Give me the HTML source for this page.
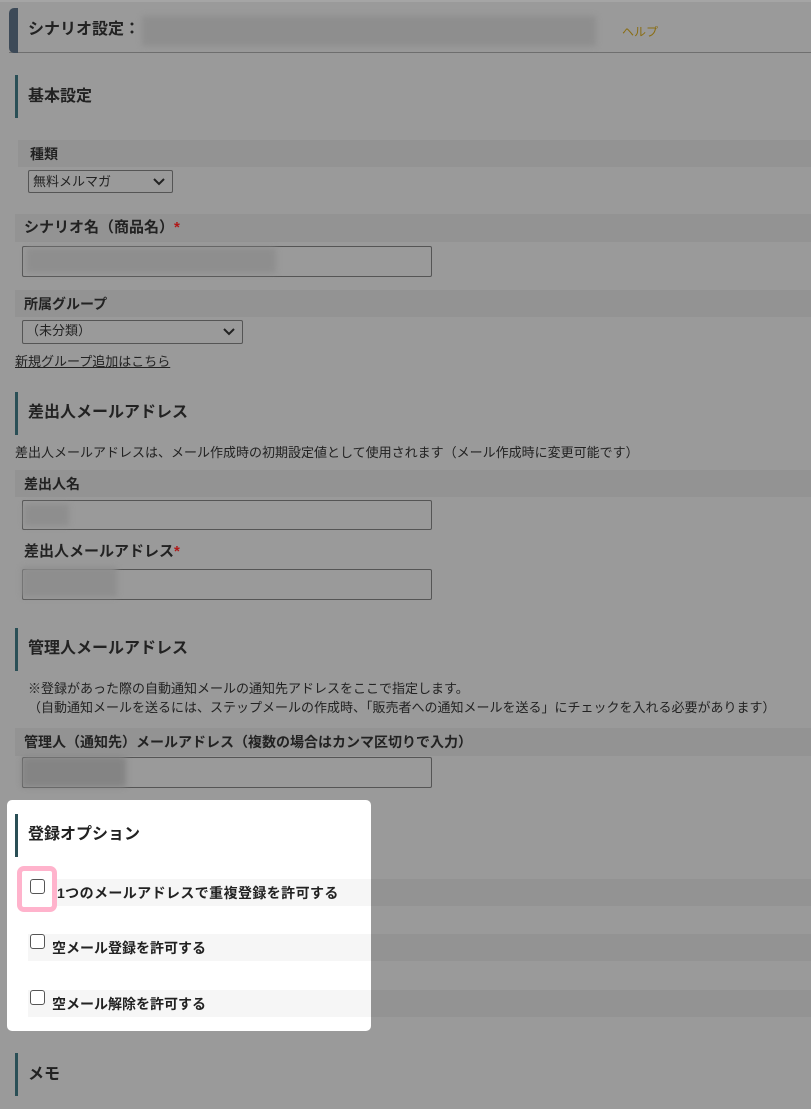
<!DOCTYPE html>
<html><head><meta charset="utf-8"><style>
*{margin:0;padding:0;box-sizing:border-box}
body{width:811px;height:1109px;background:#9a9a9a;font-family:"Liberation Sans","Noto Sans CJK JP",sans-serif;color:#222;position:relative;overflow:hidden}
.a{position:absolute;white-space:nowrap}
.h{font-weight:bold;font-size:16px;line-height:20px}
.bar{position:absolute;width:3px;background:#2a4f56}
.lb{position:absolute;background:#939393;right:0;height:27px}
.l{font-weight:bold;font-size:14px;line-height:18px}
.in{position:absolute;border:1px solid #555;border-radius:2px;background:#9a9a9a}
.blur{position:absolute;background:#8e8e8e;filter:blur(3px)}
.s{font-size:13px;line-height:16px}
.cb{position:absolute;width:15px;height:15px;border:1px solid #555;border-radius:3px;background:#fff}
.red{color:#b01818}
</style></head><body>
<div class="a" style="left:0;top:0;width:811px;height:2px;background:#a5a5a5"></div>
<div class="a" style="left:9px;top:8px;width:802px;height:45px;border-bottom:1px solid #6f6f6f"></div>
<div class="a" style="left:9px;top:8px;width:9px;height:45px;background:#3d4a58;border-radius:5px 0 0 5px"></div>
<div class="a h" style="left:28px;top:20px">シナリオ設定：</div>
<div class="blur" style="left:142px;top:16px;width:454px;height:30px"></div>
<div class="a" style="left:622px;top:23px;font-size:12px;color:#8a6d12">ヘルプ</div>

<div class="bar" style="left:15px;top:75px;height:43px"></div>
<div class="a h" style="left:28px;top:87px">基本設定</div>
<div class="lb" style="left:18px;top:140px;height:27px"></div>
<div class="a l" style="left:30px;top:145px">種類</div>
<div class="in" style="left:28px;top:170px;width:145px;height:23px"></div>
<div class="a s" style="left:33px;top:174px">無料メルマガ</div>
<svg class="a" style="left:153px;top:177px" width="12" height="10"><path d="M1 2 L6 7 L11 2" stroke="#222" stroke-width="2" fill="none"/></svg>

<div class="lb" style="left:15px;top:214px;height:28px"></div>
<div class="a l" style="left:24px;top:219px;font-size:15px">シナリオ名（商品名）<span class="red">*</span></div>
<div class="in" style="left:22px;top:246px;width:410px;height:31px"></div>
<div class="blur" style="left:26px;top:248px;width:250px;height:25px"></div>
<div class="lb" style="left:15px;top:290px;height:27px"></div>
<div class="a l" style="left:24px;top:295px">所属グループ</div>
<div class="in" style="left:22px;top:320px;width:221px;height:24px"></div>
<div class="a s" style="left:26px;top:323px">（未分類）</div>
<svg class="a" style="left:223px;top:327px" width="12" height="10"><path d="M1 2 L6 7 L11 2" stroke="#222" stroke-width="2" fill="none"/></svg>
<div class="a" style="left:15px;top:351px;font-size:13px;text-decoration:underline">新規グループ追加はこちら</div>

<div class="bar" style="left:15px;top:392px;height:43px"></div>
<div class="a h" style="left:28px;top:403px">差出人メールアドレス</div>
<div class="a s" style="left:15px;top:445px">差出人メールアドレスは、メール作成時の初期設定値として使用されます（メール作成時に変更可能です）</div>
<div class="lb" style="left:15px;top:470px;height:27px"></div>
<div class="a l" style="left:24px;top:475px">差出人名</div>
<div class="in" style="left:22px;top:500px;width:410px;height:30px"></div>
<div class="blur" style="left:24px;top:504px;width:45px;height:22px"></div>
<div class="a l" style="left:24px;top:543px;font-size:15px">差出人メールアドレス<span class="red">*</span></div>
<div class="in" style="left:22px;top:569px;width:410px;height:31px"></div>
<div class="blur" style="left:22px;top:567px;width:95px;height:30px"></div>

<div class="bar" style="left:15px;top:628px;height:43px"></div>
<div class="a h" style="left:28px;top:639px">管理人メールアドレス</div>
<div class="a s" style="left:28px;top:681px">※登録があった際の自動通知メールの通知先アドレスをここで指定します。</div>
<div class="a s" style="left:28px;top:700px">（自動通知メールを送るには、ステップメールの作成時、「販売者への通知メールを送る」にチェックを入れる必要があります）</div>
<div class="lb" style="left:15px;top:728px;height:28px"></div>
<div class="a l" style="left:24px;top:733px">管理人（通知先）メールアドレス（複数の場合はカンマ区切りで入力）</div>
<div class="in" style="left:22px;top:757px;width:410px;height:31px"></div>
<div class="blur" style="left:22px;top:757px;width:104px;height:30px;background:#848484"></div>

<div class="a" style="left:7px;top:800px;width:364px;height:231px;background:#fff;border-radius:5px"></div>
<div class="bar" style="left:15px;top:814px;height:43px"></div>
<div class="a h" style="left:28px;top:825px">登録オプション</div>
<div class="a" style="left:28px;top:879px;width:343px;height:27px;background:#f6f6f6"></div>
<div class="lb" style="left:371px;top:879px"></div>
<div class="a" style="left:17px;top:866px;width:40px;height:46px;border:5px solid #ffb3cc;border-radius:7px;background:#fff"></div>
<div class="cb" style="left:30px;top:879px"></div>
<div class="a l" style="left:57px;top:884px;letter-spacing:0.4px">1つのメールアドレスで重複登録を許可する</div>
<div class="a" style="left:28px;top:934px;width:343px;height:27px;background:#f6f6f6"></div>
<div class="lb" style="left:371px;top:934px"></div>
<div class="cb" style="left:30px;top:934px"></div>
<div class="a l" style="left:52px;top:939px">空メール登録を許可する</div>
<div class="a" style="left:28px;top:990px;width:343px;height:27px;background:#f6f6f6"></div>
<div class="lb" style="left:371px;top:990px"></div>
<div class="cb" style="left:30px;top:990px"></div>
<div class="a l" style="left:52px;top:995px">空メール解除を許可する</div>

<div class="bar" style="left:15px;top:1053px;height:43px"></div>
<div class="a h" style="left:28px;top:1065px">メモ</div>
</body></html>
